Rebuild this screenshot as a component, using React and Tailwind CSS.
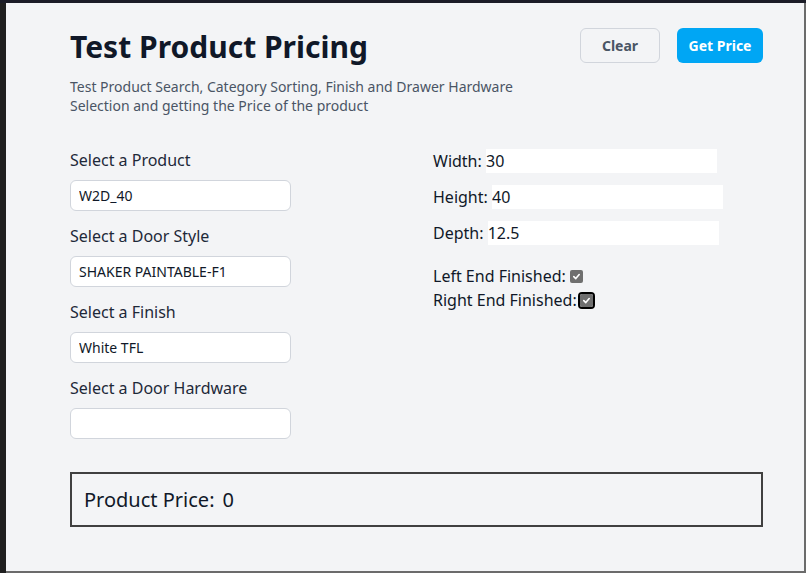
import React, { useState } from "react";

function Check({ focused }) {
  return (
    <span
      className={
        focused
          ? "inline-flex items-center justify-center w-[17px] h-[17px] rounded-[4px] border-2 border-black ml-[1px]"
          : "inline-flex items-center justify-center w-[13px] h-[13px] ml-[4px]"
      }
    >
      <span className="flex items-center justify-center w-[13px] h-[13px] rounded-[2px] bg-[#6f6f6f]">
        <svg width="9" height="9" viewBox="0 0 10 10">
          <path d="M2 5.2 L4.2 7.3 L8 2.8" fill="none" stroke="white" strokeWidth="1.8" strokeLinecap="round" strokeLinejoin="round" />
        </svg>
      </span>
    </span>
  );
}

function Field({ label, value }) {
  return (
    <div className="flex flex-col">
      <label className="text-base leading-6 text-gray-800">{label}</label>
      <input
        type="text"
        defaultValue={value}
        className="mt-2 w-[221px] h-[31px] px-2 text-sm text-gray-900 bg-white border border-gray-300 rounded-md focus:outline-none"
      />
    </div>
  );
}

function Dim({ label, value }) {
  return (
    <div className="flex items-center h-6 text-base text-gray-900">
      <span>{label}&nbsp;</span>
      <input
        type="text"
        defaultValue={value}
        className="w-[231px] h-6 bg-white border-0 p-0 focus:outline-none"
      />
    </div>
  );
}

export default function App() {
  const [price] = useState(0);

  return (
    <div className="w-[806px] h-[573px] flex flex-col bg-[#1b1c27] font-['Noto_Sans',sans-serif] overflow-hidden">
      <div className="h-[3px] shrink-0" />
      <div className="flex flex-1 flex-row">
        <div className="w-[6px] bg-[#1f1f1f]" />
        <div className="flex-1 flex flex-col bg-[#f3f4f6] border-r-2 border-b-2 border-[#6b6b6b]">
          <div className="pl-16 w-[757px] pt-[26px]">
            <div className="flex flex-row justify-between items-start">
              <div>
                <h1 className="text-[30px] leading-9 font-bold text-gray-900">Test Product Pricing</h1>
                <p className="mt-3 text-sm leading-[19px] text-gray-600 w-[460px]">
                  Test Product Search, Category Sorting, Finish and Drawer Hardware Selection and getting the Price of the product
                </p>
              </div>
              <div className="flex flex-row gap-[17px] -mt-[1px]">
                <button className="w-[80px] h-[35px] rounded-md border border-gray-300 bg-gray-100 text-sm font-bold text-gray-600">
                  Clear
                </button>
                <button className="w-[86px] h-[35px] rounded-md bg-sky-500 text-sm font-bold text-white">
                  Get Price
                </button>
              </div>
            </div>

            <div className="flex flex-row mt-[33px]">
              <div className="w-[363px] flex flex-col gap-[13px]">
                <Field label="Select a Product" value="W2D_40" />
                <Field label="Select a Door Style" value="SHAKER PAINTABLE-F1" />
                <Field label="Select a Finish" value="White TFL" />
                <Field label="Select a Door Hardware" value="" />
              </div>
              <div className="flex flex-col mt-[1px]">
                <div className="flex flex-col gap-3">
                  <Dim label="Width:" value="30" />
                  <Dim label="Height:" value="40" />
                  <Dim label="Depth:" value="12.5" />
                </div>
                <div className="mt-[19px] flex flex-col text-base leading-6 text-gray-900">
                  <div className="flex items-center">
                    <span>Left End Finished:</span>
                    <Check />
                  </div>
                  <div className="flex items-center">
                    <span>Right End Finished:</span>
                    <Check focused />
                  </div>
                </div>
              </div>
            </div>

            <div className="mt-[33px] h-[55px] border-2 border-[#404040] flex items-center px-3 text-xl text-gray-900">
              <span>Product Price:</span>
              <span className="ml-[8px]">{price}</span>
            </div>
          </div>
        </div>
      </div>
    </div>
  );
}
